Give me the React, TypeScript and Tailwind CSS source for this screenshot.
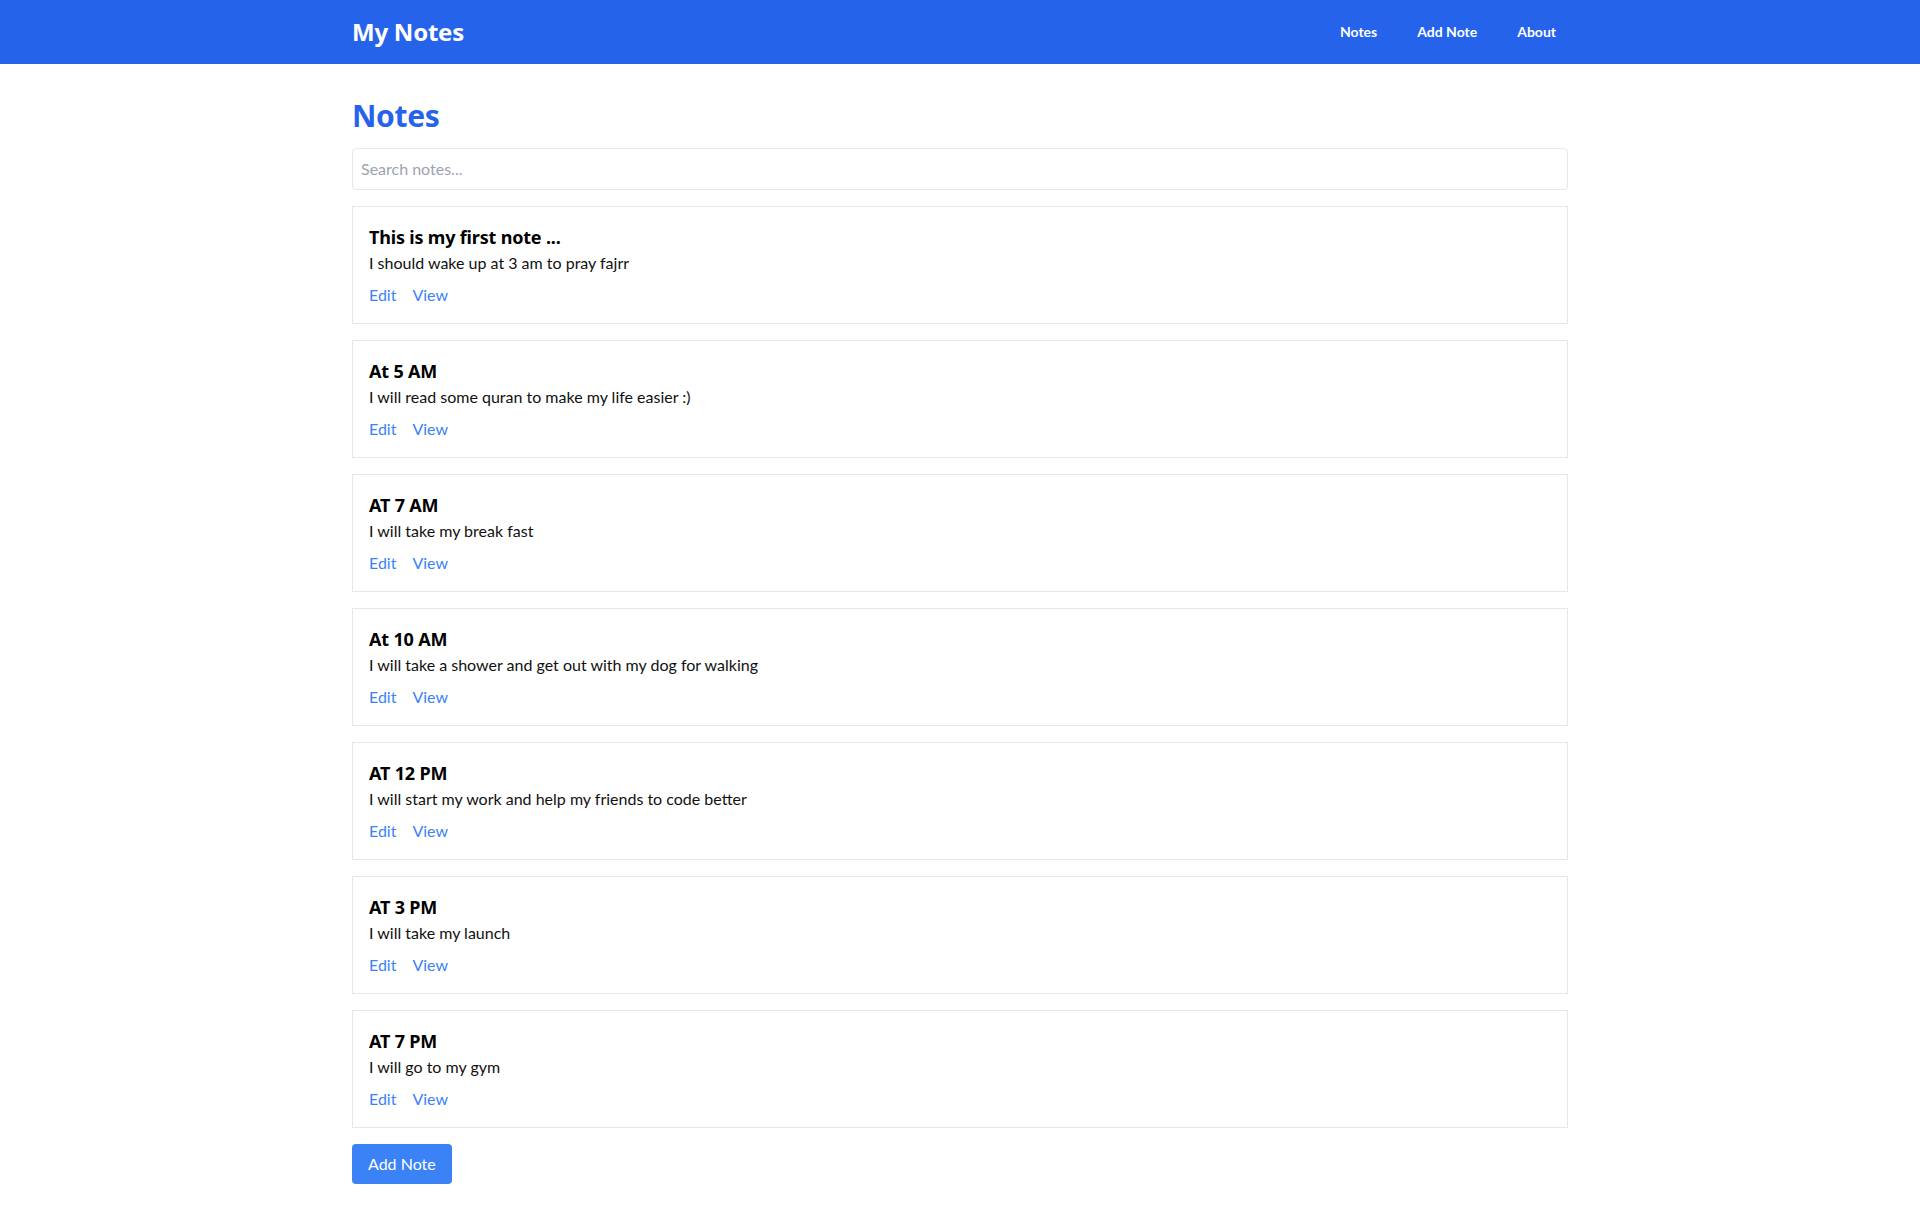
import React from 'react';

type Note = {
  title: string;
  body: string;
};

const notes: Note[] = [
  { title: 'This is my first note ...', body: 'I should wake up at 3 am to pray fajrr' },
  { title: 'At 5 AM', body: 'I will read some quran to make my life easier :)' },
  { title: 'AT 7 AM', body: 'I will take my break fast' },
  { title: 'At 10 AM', body: 'I will take a shower and get out with my dog for walking' },
  { title: 'AT 12 PM', body: 'I will start my work and help my friends to code better' },
  { title: 'AT 3 PM', body: 'I will take my launch' },
  { title: 'AT 7 PM', body: 'I will go to my gym' },
];

const NoteCard = ({ title, body }: Note) => {
  return (
    <div className="border border-[#e5e7eb] bg-white p-4 mb-4">
      <h2 className="text-lg font-bold text-black font-['Noto_Sans',sans-serif] leading-7 tracking-[-0.01em]">{title}</h2>
      <p className="text-base text-[#111]">{body}</p>
      <div className="mt-2 flex gap-4">
        <a href="#" className="text-[#3b82f6]">Edit</a>
        <a href="#" className="text-[#3b82f6]">View</a>
      </div>
    </div>
  );
};

export default function App() {
  return (
    <div className="min-h-screen bg-white font-['Lato','Noto_Sans',sans-serif]">
      <nav className="bg-[#2563eb] text-white">
        <div className="max-w-7xl mx-auto px-8 h-16 flex items-center justify-between">
          <span className="text-2xl font-bold font-['Noto_Sans',sans-serif] tracking-[-0.01em]">My Notes</span>
          <div className="flex gap-4 text-sm font-bold">
            <a href="#" className="px-3 py-2">Notes</a>
            <a href="#" className="px-3 py-2">Add Note</a>
            <a href="#" className="px-3 py-2">About</a>
          </div>
        </div>
      </nav>

      <main className="max-w-7xl mx-auto px-8 py-8">
        <h1 className="text-3xl font-bold text-[#2563eb] mt-[2px] mb-[14px] font-['Noto_Sans',sans-serif] leading-9 tracking-[-0.01em]">Notes</h1>
        <input
          type="text"
          placeholder="Search notes..."
          className="w-full border border-[#e5e7eb] rounded px-2 py-2 mb-4 text-base placeholder-[#9ca3af] focus:outline-none"
        />
        {notes.map((n, i) => (
          <NoteCard key={i} title={n.title} body={n.body} />
        ))}
        <button className="bg-[#3b82f6] text-white rounded px-4 py-2 text-base">
          Add Note
        </button>
      </main>
    </div>
  );
}
